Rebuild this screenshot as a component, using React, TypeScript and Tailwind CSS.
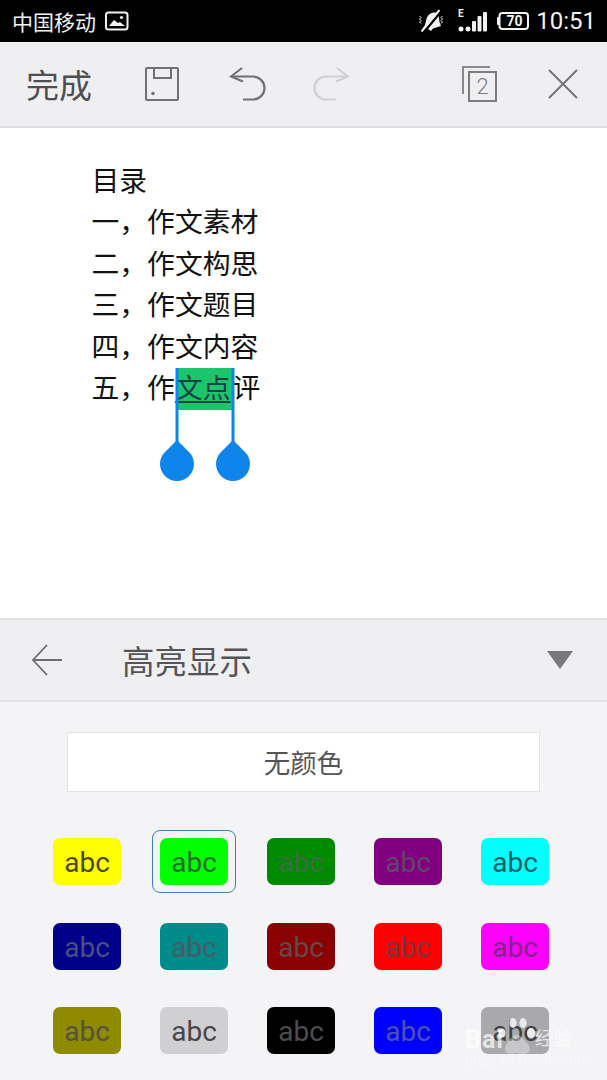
import * as React from "react";

const cjk = "font-['Noto_Sans_CJK_SC','Noto_Sans',sans-serif]";

const swatches = [
  { bg: "bg-[#ffff00]", text: "text-[#4a4a1e]" },
  { bg: "bg-[#00ff00]", text: "text-[#2a6b35]", selected: true },
  { bg: "bg-[#008a00]", text: "text-[#3f6b45]" },
  { bg: "bg-[#800080]", text: "text-[#5f4768]" },
  { bg: "bg-[#00ffff]", text: "text-[#0f5f62]" },
  { bg: "bg-[#00008b]", text: "text-[#4d4d80]" },
  { bg: "bg-[#008b8b]", text: "text-[#4c5a66]" },
  { bg: "bg-[#8b0000]", text: "text-[#66474c]" },
  { bg: "bg-[#ff0000]", text: "text-[#7a3440]" },
  { bg: "bg-[#ff00ff]", text: "text-[#7a2a80]" },
  { bg: "bg-[#8f8a00]", text: "text-[#55533a]" },
  { bg: "bg-[#d0cfd2]", text: "text-[#47474b]" },
  { bg: "bg-[#000000]", text: "text-[#4d4d4f]" },
  { bg: "bg-[#0000ff]", text: "text-[#4f4fb0]" },
  { bg: "bg-[#a9a8ab]", text: "text-[#3f3f42]" },
];

const lines = ["目录", "一，作文素材", "二，作文构思", "三，作文题目", "四，作文内容"];

function StatusBar() {
  return (
    <div className="h-[42px] bg-black flex items-center pl-3 pr-[11px] text-white">
      <span className={`${cjk} text-[21px] leading-none text-[#f2f2f2]`}>中国移动</span>
      <svg width="24" height="20" viewBox="0 0 24 20" className="ml-[9px]" fill="none">
        <rect x="1" y="1.500" width="21.500" height="17" rx="2.500" stroke="#f2f2f2" strokeWidth="2" />
        <path d="M4 15l5-6 4 3 2-1 5 4z" fill="#f2f2f2" />
        <circle cx="16.500" cy="6.500" r="1.600" fill="#f2f2f2" />
      </svg>
      <svg width="26" height="24" viewBox="0 0 26 24" className="ml-auto" fill="none">
        <path d="M5 19c2.500-2 2.500-7 4-10.500 1.500-3.500 5.500-6 9-4.500 3.500 1.500 3 6 3.500 9l1.500 4-8 2.500-2 2.500-3-2z" fill="#f2f2f2" />
        <path d="M5.500 23.500L23 2.500" stroke="#000" strokeWidth="2.500" />
        <path d="M3.500 22.500L21.500 1" stroke="#f2f2f2" strokeWidth="2" />
        <path d="M1.500 7l1.500 1.500-1.500 1.500 1.500 1.500-1.500 1.500 1.500 1.500M24.500 7l-1.500 1.500 1.500 1.500-1.500 1.500 1.500 1.500-1.500 1.500" stroke="#f2f2f2" strokeWidth="1" />
      </svg>
      <svg width="29" height="26" viewBox="0 0 29 26" className="ml-[14px]" fill="#f2f2f2">
        <text x="0" y="9" fontSize="10" fontWeight="700" fontFamily="Roboto, sans-serif">E</text>
        <circle cx="3" cy="21" r="2.500" />
        <circle cx="10" cy="21" r="2.500" />
        <rect x="14" y="13" width="4" height="10.500" rx="1" />
        <rect x="19.500" y="8" width="4" height="15.500" rx="1" />
        <rect x="25" y="4" width="4" height="19.500" rx="1" />
      </svg>
      <svg width="32" height="20" viewBox="0 0 32 20" className="ml-[10px]" fill="none">
        <rect x="2.500" y="2" width="28.500" height="16" rx="3" stroke="#f2f2f2" strokeWidth="2" />
        <rect x="0" y="6" width="3" height="8" rx="1" fill="#f2f2f2" />
        <text x="17.500" y="15" textAnchor="middle" fontSize="14" fontWeight="700" fill="#f2f2f2" fontFamily="Roboto, sans-serif">70</text>
      </svg>
      <span className="ml-[7px] font-['Roboto',sans-serif] text-[24px] leading-none text-[#f2f2f2]">10:51</span>
    </div>
  );
}

function Toolbar() {
  return (
    <div className="h-[86px] bg-[#efeef0] border-b-2 border-[#dcdcde] flex items-center pl-[26px]">
      <span className={`${cjk} text-[33px] leading-none text-[#4f4f52] w-[66px] whitespace-nowrap`}>完成</span>
      {/* 保存 */}
      <svg width="36" height="36" viewBox="0 0 36 36" className="ml-[52px]" fill="none" stroke="#717174" strokeWidth="2">
        <path d="M3 2h30a1 1 0 0 1 1 1v30a1 1 0 0 1-1 1H3a1 1 0 0 1-1-1V3a1 1 0 0 1 1-1z" />
        <path d="M10 2v10h17V2" />
        <circle cx="9" cy="27.500" r="0.800" fill="#717174" />
      </svg>
      {/* 撤销 */}
      <svg width="37" height="36" viewBox="0 0 37 36" className="ml-[49px]" fill="none" stroke="#717174" strokeWidth="2.200">
        <path d="M13 2L2 10.500l12 5" />
        <path d="M2 10.500h22a11 11 0 0 1 0 23H14" />
      </svg>
      {/* 重做 */}
      <svg width="37" height="36" viewBox="0 0 37 36" className="ml-[47px]" fill="none" stroke="#cfcfd1" strokeWidth="2.200">
        <path d="M24 2l11 8.500-12 5" />
        <path d="M35 10.500H13a11 11 0 0 0 0 23h10" />
      </svg>
      {/* 窗口数 */}
      <div className="relative w-[35px] h-[36px] ml-[112px]">
        <div className="absolute left-0 top-0 w-[28px] h-[28px] border-t-2 border-l-2 border-[#8a8a8d]" />
        <div className="absolute left-[6px] top-[5px] w-[29px] h-[31px] border-2 border-[#7c7c7f] flex items-center justify-center font-['Roboto',sans-serif] font-light text-[22px] leading-none text-[#7c7c7f]">2</div>
      </div>
      {/* 关闭 */}
      <svg width="32" height="32" viewBox="0 0 32 32" className="ml-[50px]" fill="none" stroke="#747477" strokeWidth="2">
        <path d="M2 2l28 28M30 2L2 30" />
      </svg>
    </div>
  );
}

function Handle({ className }: { className: string }) {
  return (
    <div className={`absolute top-[2px] ${className}`}>
      <svg width="36" height="114" viewBox="0 0 36 114" fill="#0e85ea">
        <rect x="16.500" y="0" width="3" height="82" />
        <path d="M18 72l12 12a17 17 0 1 1-24 0z" />
      </svg>
    </div>
  );
}

function Editor() {
  return (
    <div className={`h-[490px] bg-white pt-[31px] pl-[91.500px] ${cjk} text-[27.800px] leading-[41.400px] text-[#111]`}>
      {lines.map((line) => (
        <div key={line}>{line}</div>
      ))}
      <div className="flex">
        <span>五，作</span>
        <span className="relative h-[41.400px] pr-[2px]">
          <span className="absolute left-[2px] right-0 top-[2px] h-[42px] bg-[#1cc56a]" />
          <span className="relative underline decoration-[2px] underline-offset-[3px] decoration-[#14404a] text-[#16404a]">文点</span>
          <Handle className="left-[-16px]" />
          <Handle className="right-[-18px]" />
        </span>
        <span>评</span>
      </div>
    </div>
  );
}

function Swatch({ bg, text, selected }: { bg: string; text: string; selected?: boolean }) {
  return (
    <div className={`relative w-[68px] h-[47px] rounded-[7px] pt-[3px] ${bg} flex items-center justify-center font-['Roboto',sans-serif] text-[28px] leading-none ${text}`}>
      abc
      {selected && <div className="absolute -left-[8px] -right-[8px] -top-[8px] -bottom-[8px] rounded-[8px] border-[1.500px] border-[#3f7cc4]" />}
    </div>
  );
}

// 百度经验水印，盖在右下角色块上
function Watermark() {
  return (
    <div className="absolute left-[465px] top-[1012px] w-[112px] h-[56px] text-white">
      <svg width="46" height="42" viewBox="0 0 46 42" className="absolute left-[30px] top-[2px] opacity-90" fill="#f3f3f5">
        <ellipse cx="7" cy="19" rx="3.500" ry="4.500" />
        <ellipse cx="18" cy="9" rx="3.500" ry="5" />
        <ellipse cx="28" cy="9" rx="3.500" ry="5" />
        <ellipse cx="36" cy="19" rx="4" ry="5" />
        <path d="M22 21c4 0 6 4 10 8s4 11-3 11-5-2-8-1-11 2-11-4 8-14 12-14z" fillOpacity="0.45" />
      </svg>
      <div className="absolute left-0 top-[15px] font-['Roboto',sans-serif] font-bold text-[25px] leading-none tracking-[1px] opacity-70">Bai</div>
      <div className={`absolute left-[70px] top-[16px] ${cjk} text-[18.500px] leading-none opacity-70`}>经验</div>
      <div className="absolute left-0 top-[41px] font-['Roboto',sans-serif] text-[14px] leading-none tracking-[0.700px] opacity-40">jingyan.baidu.com</div>
    </div>
  );
}

function HighlightPanel() {
  return (
    <div className="flex-1 bg-[#f4f4f7]">
      <div className="h-[84px] bg-[#efeef0] border-t-2 border-b-2 border-[#e2e2e4] flex items-center pl-[31px] pr-[34px]">
        <svg width="32" height="32" viewBox="0 0 32 32" fill="none" stroke="#6c6c6f" strokeWidth="1.800">
          <path d="M31 16H2M16 1L2 16l14 15" />
        </svg>
        <span className={`${cjk} ml-[59px] text-[32.500px] leading-none text-[#545457]`}>高亮显示</span>
        <svg width="26" height="18" viewBox="0 0 26 18" className="ml-auto" fill="#78787b">
          <path d="M0 0h26L13 18z" />
        </svg>
      </div>
      <div className="pt-[30px]">
        <div className={`ml-[67px] w-[473px] h-[60px] bg-white border-[1.500px] border-[#e4e4e6] flex items-center justify-center ${cjk} text-[26.500px] leading-none text-[#545457]`}>无颜色</div>
        <div className="mt-[46px] ml-[53px] grid grid-cols-[repeat(5,68px)] gap-x-[39px] gap-y-[37.500px]">
          {swatches.map((s, i) => (
            <Swatch key={i} {...s} />
          ))}
        </div>
      </div>
    </div>
  );
}

export default function App() {
  return (
    <div className="relative w-[607px] h-[1080px] overflow-hidden flex flex-col bg-white">
      <StatusBar />
      <Toolbar />
      <Editor />
      <HighlightPanel />
      <Watermark />
    </div>
  );
}
